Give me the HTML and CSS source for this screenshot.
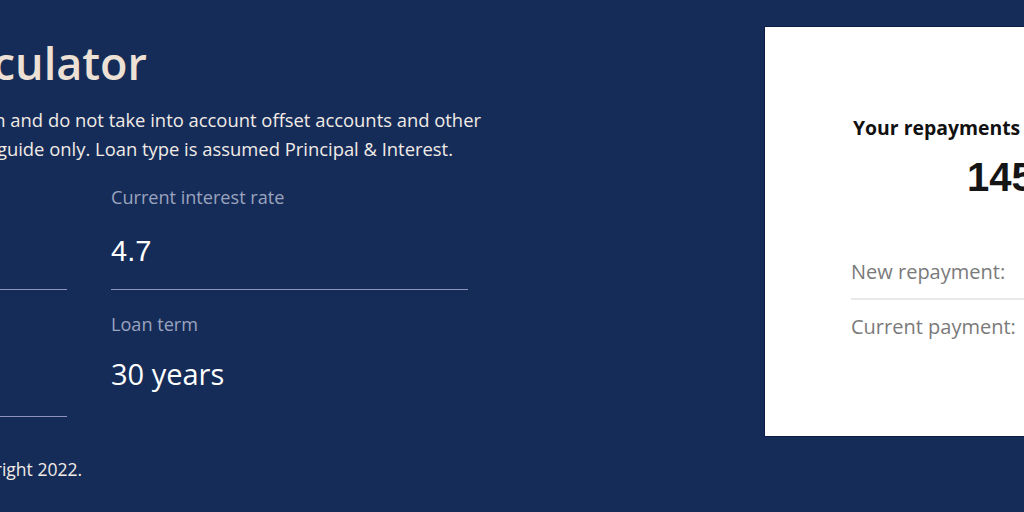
FILE: index.html
```html
<!DOCTYPE html>
<html lang="en">
<head>
<meta charset="utf-8">
<title>Repayment Calculator</title>
<link rel="stylesheet" href="styles.css">
</head>
<body>
<div class="page">
  <main class="intro">
    <h1 class="line title-line"><span>Repayment Calculator</span></h1>
    <p class="desc">
      <span class="line desc-line-1"><span>These results are estimates only based on the information given and do not take into account offset accounts and other</span></span>
      <span class="line desc-line-2"><span>fees and charges. Please use them as a guide only. Loan type is assumed Principal &amp; Interest.</span></span>
    </p>
    <form class="fields">
      <div class="field">
        <label class="field-label">Loan amount</label>
        <div class="field-input">$500,000</div>
      </div>
      <div class="field">
        <label class="field-label">Current interest rate</label>
        <div class="field-input field-input-num">4.7</div>
      </div>
      <div class="field">
        <label class="field-label">New interest rate</label>
        <div class="field-input">5.2</div>
      </div>
      <div class="field">
        <label class="field-label">Loan term</label>
        <div class="field-input field-input-select">30 years</div>
      </div>
    </form>
    <footer class="line footer-line"><span>© Mortgage Calculator. All rights reserved. Copyright 2022.</span></footer>
  </main>
  <aside class="card">
    <h2 class="card-title">Your repayments will increase by</h2>
    <div class="card-amount">145.32</div>
    <div class="card-rows">
      <div class="card-row"><span>New repayment:</span><strong>$2,738.45</strong></div>
      <div class="card-row"><span>Current payment:</span><strong>$2,593.13</strong></div>
    </div>
  </aside>
</div>
</body>
</html>
```

FILE: styles.css
```css
* { box-sizing: border-box; }

html, body {
  margin: 0;
  padding: 0;
  height: 100%;
}

body {
  background: #162c58;
  overflow: hidden;
  font-family: "Open Sans", "Noto Sans", sans-serif;
  color: #ffffff;
}

.page {
  display: flex;
  align-items: flex-start;
  margin-left: -290px;
  width: 1800px;
}

.intro {
  width: 758px;
  flex: none;
  padding-top: 34px;
}

/* lines of text whose start lies beyond the left edge of the view */
.line {
  display: flex;
  justify-content: flex-end;
  white-space: nowrap;
}

.title-line {
  width: 437px;
  margin: 0;
  font-size: 45px;
  font-weight: 600;
  line-height: 58px;
  color: #ede1d5;
}

.desc {
  margin: 13px 0 0;
  font-size: 18.4px;
  line-height: 29px;
  color: #f1ebe6;
}

.desc-line-1 { width: 771px; }
.desc-line-2 { width: 743px; }

.fields {
  display: grid;
  grid-template-columns: 357px 357px;
  column-gap: 44px;
  row-gap: 22px;
  margin-top: 22px;
}

.field {
  display: flex;
  flex-direction: column;
}

.field-label {
  font-size: 18.1px;
  line-height: 24px;
  color: #9ba4bf;
}

.field-input {
  margin-top: 4px;
  height: 77px;
  line-height: 76px;
  font-size: 29px;
  color: #ffffff;
  border-bottom: 1px solid #8e94bd;
}

.field-input-num {
  font-family: "Liberation Sans", Arial, sans-serif;
  font-size: 29px;
}

.field-input-select {
  border-bottom-color: transparent;
  line-height: 67px;
}

.footer-line {
  width: 372px;
  margin-top: 40px;
  font-size: 17.5px;
  line-height: 24px;
  color: #f1ebe6;
}

.card {
  flex: none;
  width: 680px;
  height: 409px;
  margin-top: 27px;
  margin-left: 297px;
  padding: 88px 86px 0;
  background: #ffffff;
  box-shadow: 0 0 0 1px #0d1c44;
  color: #111111;
}

.card-title {
  margin: 0 0 0 2px;
  font-size: 19.4px;
  font-weight: 700;
  line-height: 26px;
}

.card-amount {
  margin-top: 12px;
  padding-left: 116px;
  font-family: "Liberation Sans", Arial, sans-serif;
  font-size: 40px;
  font-weight: 700;
  line-height: 48px;
  color: #151515;
}

.card-rows {
  margin-top: 45px;
}

.card-row {
  display: flex;
  justify-content: space-between;
  padding: 12px 0;
  font-size: 20px;
  line-height: 28px;
  color: #7a7a7a;
}

.card-row + .card-row {
  border-top: 2px solid #e8e8e8;
  padding-top: 13px;
}

.card-row strong {
  font-weight: 600;
  color: #111111;
}
```
